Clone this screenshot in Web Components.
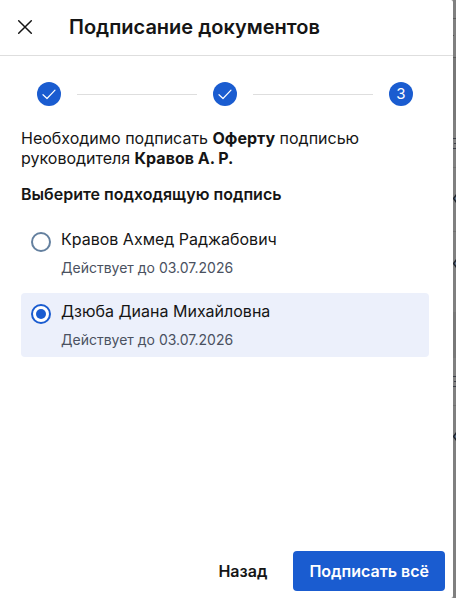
<!DOCTYPE html>
<html lang="ru">
<head>
<meta charset="utf-8">
<meta name="viewport" content="width=device-width, initial-scale=1">
<title>Подписание документов</title>
<style>
html, body {
    height: 100%;
    margin: 0;
}
body {
    font-family: Inter, "Liberation Sans", sans-serif;
    font-size: 16px;
    line-height: 20px;
    color: #151515;
    background-color: #808080;
    display: flex;
    overflow: hidden;
}
</style>
</head>
<body>
<sign-panel>
    <span slot="title">Подписание документов</span>
    <step-bar data-total="3" data-current="3"></step-bar>
    <p>Необходимо подписать <b>Оферту</b> подписью руководителя <b>Кравов А. Р.</b></p>
    <signature-list>
        <span slot="legend">Выберите подходящую подпись</span>
    </signature-list>
    <sign-button slot="footer">Назад</sign-button>
    <sign-button slot="footer" data-kind="primary">Подписать всё</sign-button>
</sign-panel>
<page-backdrop></page-backdrop>

<script>
const panelTemplate = document.createElement("template");
panelTemplate.innerHTML = `
<style>
:host {
    flex: 1;
    min-width: 0;
    min-height: 100%;
    box-sizing: border-box;
    display: flex;
    flex-direction: column;
    background-color: #fff;
    border-radius: 0 2px 2px 0;
}
header {
    display: flex;
    align-items: center;
    gap: 28px;
    padding: 15px 13px 16px;
    border-bottom: 1px solid #dedede;
}
h1 {
    margin: 0;
    font-size: 20px;
    line-height: 24px;
    font-weight: 600;
}
.close {
    display: flex;
    padding: 4px;
    margin-right: 4px;
    border: 0;
    background: none;
    color: inherit;
    cursor: pointer;
}
main {
    flex: 1;
    padding: 26px 24px 24px 21px;
}
::slotted(p) {
    margin: 22px 0 16px;
}
footer {
    display: flex;
    justify-content: flex-end;
    gap: 10px;
    padding: 7px 8px;
}
</style>

<header>
    <button class="close" type="button" aria-label="Закрыть">
        <svg width="16" height="16" viewBox="0 0 16 16" fill="none" stroke="currentColor" stroke-width="1.5" stroke-linecap="round"><path d="M1.7 1.7l12.6 12.6M14.3 1.7L1.7 14.3"/></svg>
    </button>
    <h1><slot name="title"></slot></h1>
</header>
<main><slot></slot></main>
<footer><slot name="footer"></slot></footer>
`;

class SignPanel extends HTMLElement
{
    constructor()
    {
        super();
        this.attachShadow({ mode: "open" });
        this.shadowRoot.appendChild(panelTemplate.content.cloneNode(true));
        this.close = this.shadowRoot.querySelector(".close");
    }

    connectedCallback()
    {
        this.close.onclick = () => this.remove();
    }

    disconnectedCallback()
    {
        this.close.onclick = null;
    }
}

customElements.define("sign-panel", SignPanel);

const stepTemplate = document.createElement("template");
stepTemplate.innerHTML = `
<style>
:host {
    display: block;
}
.steps {
    display: flex;
    align-items: center;
    gap: 16px;
    padding: 0 16px;
}
.step {
    display: flex;
    align-items: center;
    justify-content: center;
    width: 24px;
    height: 24px;
    border-radius: 50%;
    background-color: #1a5cd0;
    color: #fff;
    font-size: 15px;
    line-height: 24px;
}
.line {
    flex: 1;
    height: 1px;
    background-color: #dedede;
}
</style>

<div class="steps"></div>
`;

class StepBar extends HTMLElement
{
    constructor()
    {
        super();
        this.attachShadow({ mode: "open" });
        this.shadowRoot.appendChild(stepTemplate.content.cloneNode(true));
        this.steps = this.shadowRoot.querySelector(".steps");
    }

    connectedCallback()
    {
        this.render();
    }

    render()
    {
        const total = Number(this.getAttribute("data-total"));
        const current = Number(this.getAttribute("data-current"));
        const check = `<svg width="24" height="24" viewBox="0 0 24 24" fill="none" stroke="currentColor" stroke-width="1.2" stroke-linecap="round" stroke-linejoin="round"><path d="M6 12.7l4 3.8 8-8.3"/></svg>`;
        const items = [];
        for (let i = 1; i <= total; i++) {
            items.push(`<span class="step">${i < current ? check : i}</span>`);
        }
        this.steps.innerHTML = items.join(`<span class="line"></span>`);
    }
}

customElements.define("step-bar", StepBar);

const listTemplate = document.createElement("template");
listTemplate.innerHTML = `
<style>
:host {
    display: block;
}
fieldset {
    margin: 0;
    padding: 0;
    border: 0;
    min-width: 0;
}
legend {
    padding: 0;
    margin-bottom: 17px;
    font-weight: 600;
}
.rows {
    display: grid;
    gap: 8px;
}
label {
    display: flex;
    gap: 10px;
    padding: 8px 10px 7px;
    border-radius: 4px;
    cursor: pointer;
}
label:has(input:checked) {
    background-color: #ecf0fb;
}
input {
    appearance: none;
    flex: none;
    display: grid;
    place-content: center;
    box-sizing: border-box;
    width: 20px;
    height: 20px;
    margin: 3px 0 0;
    border: 2px solid #64809f;
    border-radius: 50%;
    background-color: #fff;
}
input:checked {
    border-color: #1a5cd0;
}
input:checked::before {
    content: "";
    width: 10px;
    height: 10px;
    border-radius: 50%;
    background-color: #1a5cd0;
}
.name {
    display: block;
}
.date {
    display: block;
    margin-top: 9px;
    font-size: 14px;
    color: #4a5160;
}
</style>

<fieldset>
    <legend><slot name="legend"></slot></legend>
    <div class="rows">
        <label>
            <input type="radio" name="signature">
            <span><span class="name">Кравов Ахмед Раджабович</span><span class="date">Действует до 03.07.2026</span></span>
        </label>
        <label>
            <input type="radio" name="signature" checked>
            <span><span class="name">Дзюба Диана Михайловна</span><span class="date">Действует до 03.07.2026</span></span>
        </label>
    </div>
</fieldset>
`;

class SignatureList extends HTMLElement
{
    constructor()
    {
        super();
        this.attachShadow({ mode: "open" });
        this.shadowRoot.appendChild(listTemplate.content.cloneNode(true));
    }
}

customElements.define("signature-list", SignatureList);

const buttonTemplate = document.createElement("template");
buttonTemplate.innerHTML = `
<style>
:host {
    display: block;
}
button {
    height: 40px;
    padding: 0 16px;
    border: 0;
    border-radius: 4px;
    background: none;
    font: inherit;
    font-weight: 600;
    color: inherit;
    cursor: pointer;
}
:host([data-kind="primary"]) button {
    background-color: #1a5cd0;
    color: #fff;
}
</style>

<button type="button"><slot></slot></button>
`;

class SignButton extends HTMLElement
{
    constructor()
    {
        super();
        this.attachShadow({ mode: "open" });
        this.shadowRoot.appendChild(buttonTemplate.content.cloneNode(true));
    }
}

customElements.define("sign-button", SignButton);

// edge of the dimmed page that shows beside the panel
const backdropTemplate = document.createElement("template");
backdropTemplate.innerHTML = `
<style>
:host {
    display: block;
    flex: none;
    width: 3px;
    overflow: hidden;
}
svg {
    display: block;
}
</style>

<svg width="3" height="598" viewBox="0 0 3 598" aria-hidden="true">
    <path fill="#787878" d="M0 58h3v62H0zM0 312h3v46H0z"/>
    <path stroke="#5c5c5c" d="M0 18.5h3M0 57.5h3"/>
    <path stroke="#505050" d="M0 35.5h1"/>
    <path stroke="#707070" d="M0 167.5h3M0 231.5h3M0 405.5h3"/>
    <path stroke="#3c3f48" d="M0 138.5h3M1 143.5h2M0 148.5h3M0 376.5h3M1 381.5h2M0 386.5h3"/>
    <path stroke="#20242c" stroke-width="1.5" fill="#5f7590" d="M4 194L0.5 198.5L4 203M4 259L0.5 263.5L4 268M4 432L0.5 436.5L4 441"/>
</svg>
`;

class PageBackdrop extends HTMLElement
{
    constructor()
    {
        super();
        this.attachShadow({ mode: "open" });
        this.shadowRoot.appendChild(backdropTemplate.content.cloneNode(true));
    }
}

customElements.define("page-backdrop", PageBackdrop);
</script>
</body>
</html>
